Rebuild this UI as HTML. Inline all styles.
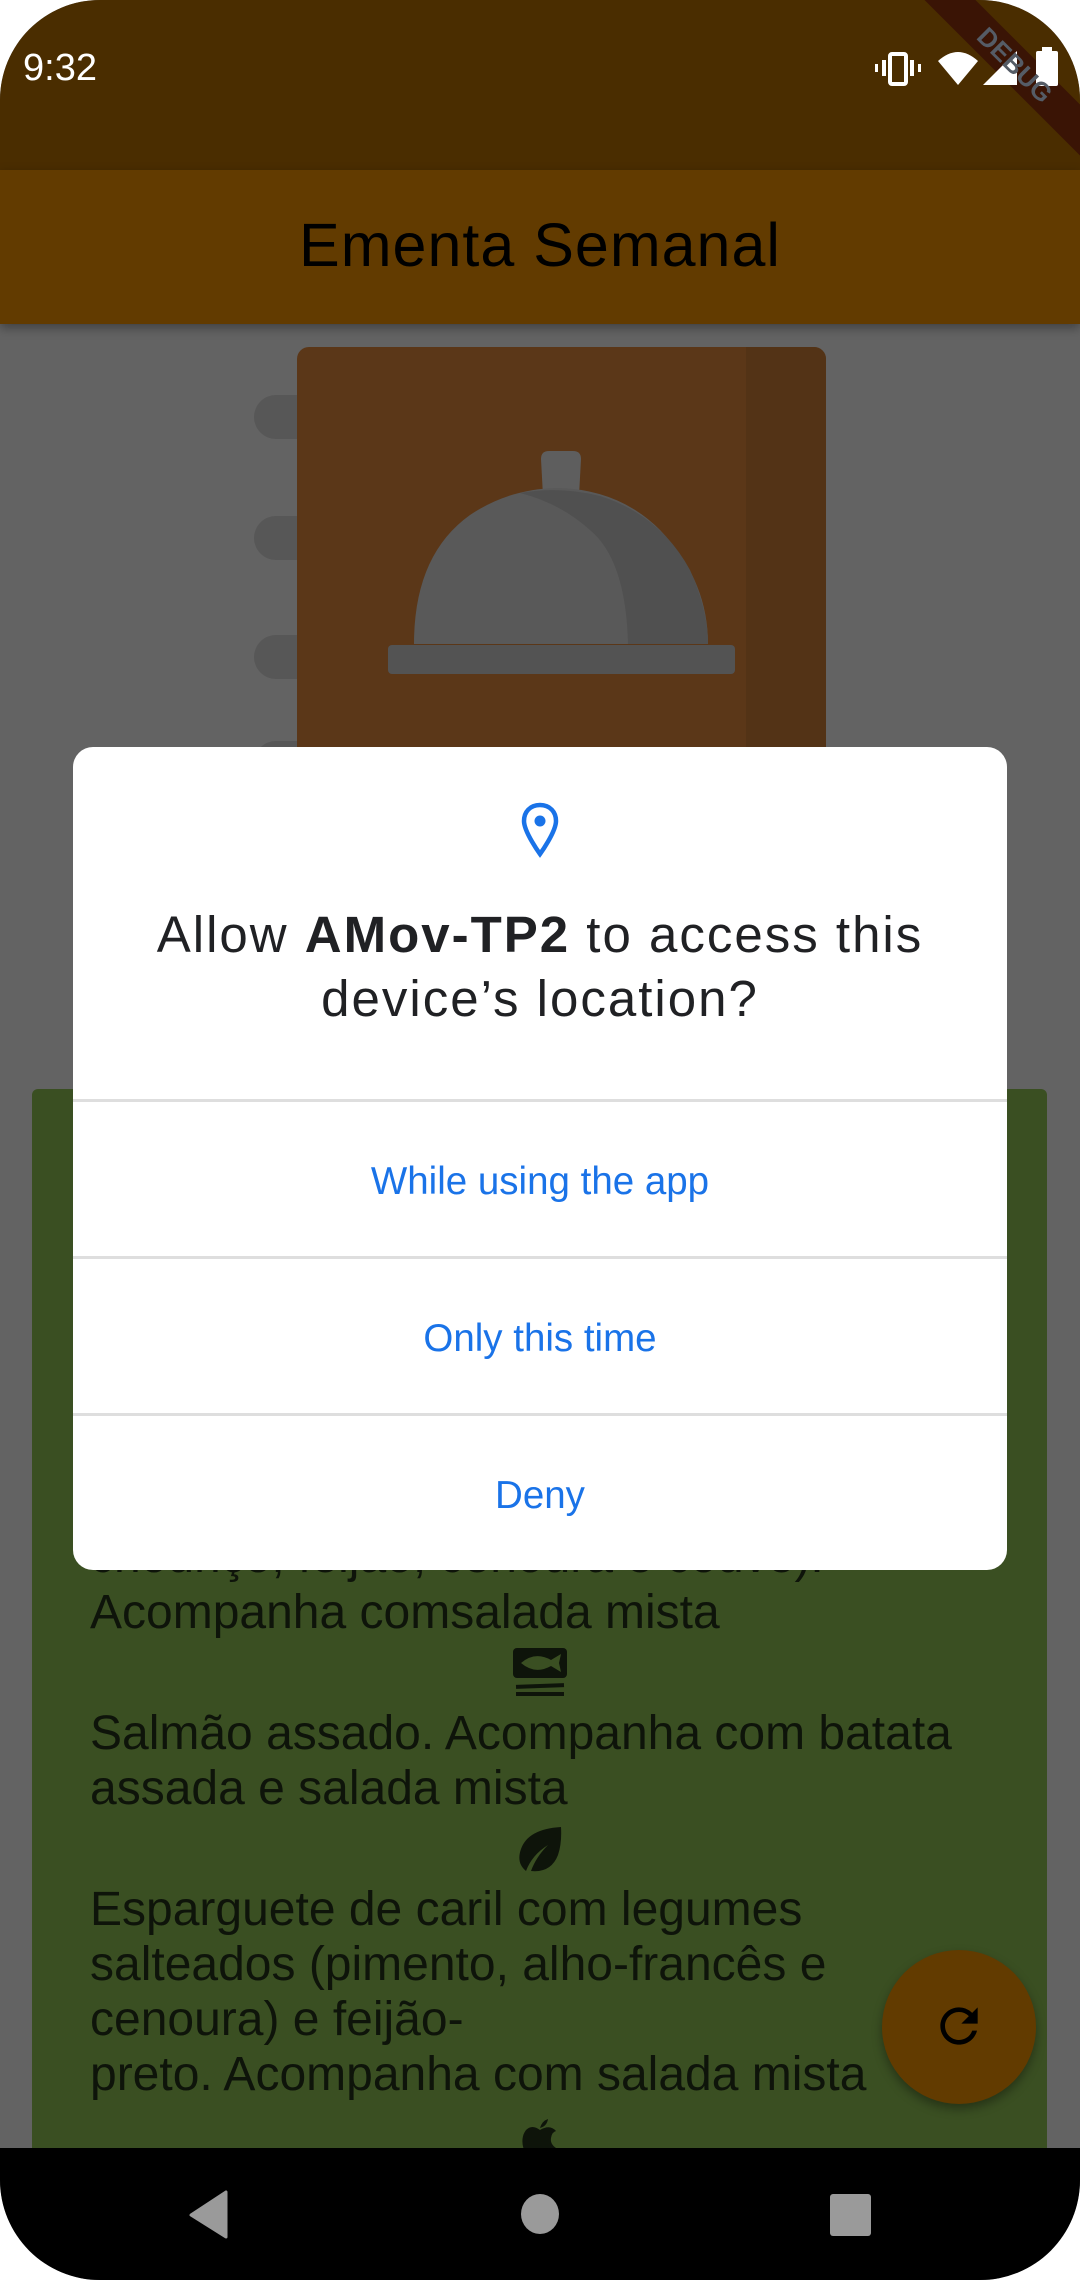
<!DOCTYPE html>
<html><head><meta charset="utf-8"><style>
*{margin:0;padding:0;box-sizing:border-box}
html,body{width:1080px;height:2280px;background:#fff;overflow:hidden;font-family:"Liberation Sans",sans-serif}
#scr{position:absolute;left:0;top:0;width:1080px;height:2280px;border-radius:100px;overflow:hidden;background:#636363}
.a{position:absolute}
.t{position:absolute;left:90px;font-size:48px;color:#0e140a;white-space:nowrap;line-height:55px}
.btn{position:absolute;left:0;width:934px;text-align:center;color:#1a73e8;font-size:38.5px}
.div{position:absolute;left:0;width:934px;height:3px;background:#dedede}
</style></head><body>
<div id="scr">
 <div class="a" style="left:0;top:0;width:1080px;height:170px;background:#4a2d00"></div>
 <div class="a" style="left:23px;top:47px;font-size:38px;color:#fff">9:32</div>
 <div class="a" style="left:865px;top:47px;width:300px;height:36px;background:#3a1405;transform:rotate(45deg);transform-origin:50% 50%;"></div>
 <svg class="a" style="left:870px;top:45px" width="210" height="45" viewBox="0 0 210 45">
  <g fill="#fff">
   <rect x="20" y="9" width="16" height="30" rx="2" fill="none" stroke="#fff" stroke-width="4"/>
   <rect x="12" y="15" width="4" height="16"/><rect x="40" y="15" width="4" height="16"/>
   <rect x="5" y="19" width="3" height="8"/><rect x="48" y="19" width="3" height="8"/>
   <path d="M68 16 Q88 -2 108 16 L88 40Z"/>
   <path d="M113 40 L147 6 V40Z"/>
   <rect x="166" y="6" width="22" height="35" rx="2"/><rect x="172" y="2" width="10" height="5"/>
  </g>
 </svg>
 <div class="a" style="left:865px;top:47px;width:300px;height:36px;line-height:36px;text-align:center;color:#555c66;font-weight:bold;font-size:26px;transform:rotate(45deg);transform-origin:50% 50%">DEBUG</div>
 <div class="a" style="left:0;top:170px;width:1080px;height:154px;background:#623b00;box-shadow:0 4px 10px rgba(0,0,0,.35)"></div>
 <div class="a" style="left:0;top:210px;width:1080px;text-align:center;font-size:61px;letter-spacing:1px;color:#000">Ementa Semanal</div>
 <!-- book -->
 <div class="a" style="left:254px;top:395px;width:70px;height:44px;border-radius:22px;background:#575757"></div>
 <div class="a" style="left:254px;top:516px;width:70px;height:44px;border-radius:22px;background:#575757"></div>
 <div class="a" style="left:254px;top:635px;width:70px;height:44px;border-radius:22px;background:#575757"></div>
 <div class="a" style="left:254px;top:741px;width:70px;height:44px;border-radius:22px;background:#575757"></div>
 <div class="a" style="left:297px;top:347px;width:529px;height:760px;border-radius:12px;background:#5b3718;overflow:hidden">
  <div class="a" style="left:449px;top:0;width:80px;height:760px;background:#533316"></div>
 </div>
 <svg class="a" style="left:380px;top:440px" width="370" height="250" viewBox="380 440 370 250">
  <path d="M541 459 Q541 451 549 451 L573 451 Q581 451 581 459 L579 496 L543 496Z" fill="#5e5e5e"/>
  <path d="M414 644 Q414 555 470 515 Q510 488 560 488 Q620 490 660 530 Q708 580 708 644Z" fill="#595959"/>
  <path d="M520 493 Q560 486 600 496 Q660 515 690 570 Q708 610 708 644 L628 644 Q626 560 590 530 Q560 503 520 493Z" fill="#505050"/>
  <rect x="388" y="645" width="347" height="29" rx="4" fill="#535353"/>
 </svg>
 <!-- green card -->
 <div class="a" style="left:32px;top:1089px;width:1015px;height:1100px;background:#3a4f22;border-radius:6px"></div>
 <div class="t" style="top:1529px">chouriço, feijão, cenoura e couve).</div>
 <div class="t" style="top:1585px">Acompanha comsalada mista</div>
 <svg class="a" style="left:513px;top:1648px" width="55" height="50" viewBox="0 0 55 50">
  <rect x="0" y="0" width="54" height="30" rx="4" fill="#0e140a"/>
  <path d="M8 15 Q22 3 38 12 L48 6 L46 15 L48 24 L38 18 Q22 27 8 15Z" fill="#3a4f22"/>
  <rect x="3" y="36" width="48" height="4" fill="#0e140a" transform="rotate(-2 27 38)"/>
  <rect x="3" y="44" width="48" height="4" fill="#0e140a"/>
 </svg>
 <div class="t" style="top:1706px">Salmão assado. Acompanha com batata<br>assada e salada mista</div>
 <svg class="a" style="left:518px;top:1827px" width="44" height="45" viewBox="0 0 44 45">
  <path d="M43 0 Q10 2 3 22 Q-2 36 8 44 Q14 28 30 18 Q18 30 13 44 Q33 46 40 28 Q44 16 43 0Z" fill="#0e140a"/>
 </svg>
 <div class="t" style="top:1882px">Esparguete de caril com legumes<br>salteados (pimento, alho-francês e<br>cenoura) e feijão-<br>preto. Acompanha com salada mista</div>
 <svg class="a" style="left:520px;top:2118px" width="40" height="40" viewBox="0 0 40 40">
  <path d="M20 12 Q12 6 6 12 Q0 20 4 32 Q8 40 14 38 Q20 36 26 38 Q32 40 36 30 Q30 26 31 20 Q32 14 36 13 Q30 6 20 12Z M20 10 Q22 3 28 1 Q27 8 20 10Z" fill="#0e140a"/>
 </svg>
 <!-- FAB -->
 <div class="a" style="left:882px;top:1950px;width:154px;height:154px;border-radius:50%;background:#623b00;box-shadow:0 5px 10px rgba(0,0,0,.35)"></div>
 <svg class="a" style="left:931px;top:1998px" width="56" height="56" viewBox="0 0 24 24">
  <path d="M17.65 6.35A7.958 7.958 0 0 0 12 4c-4.42 0-7.990 3.58-7.99 8s3.57 8 7.99 8c3.73 0 6.84-2.55 7.73-6h-2.08A5.99 5.99 0 0 1 12 18c-3.31 0-6-2.690-6-6s2.69-6 6-6c1.66 0 3.14.69 4.22 1.78L13 11h7V4l-2.35 2.35z" fill="#000"/>
 </svg>
 <!-- dialog -->
 <div class="a" style="left:73px;top:747px;width:934px;height:823px;background:#fff;border-radius:20px">
  <svg class="a" style="left:448px;top:55px" width="38" height="56" viewBox="0 0 38 56">
   <path d="M19 3 C9 3 3 10 3 19 C3 30 19 52 19 52 C19 52 35 30 35 19 C35 10 29 3 19 3Z" fill="none" stroke="#1a73e8" stroke-width="4.5"/>
   <circle cx="19" cy="19" r="5.5" fill="#1a73e8"/>
  </svg>
  <div class="a" style="left:0;top:156px;width:934px;text-align:center;font-size:51px;letter-spacing:2px;line-height:64px;color:#202124">Allow <b>AMov-TP2</b> to access this<br>device’s location?</div>
  <div class="div" style="top:352px"></div>
  <div class="btn" style="top:413px">While using the app</div>
  <div class="div" style="top:509px"></div>
  <div class="btn" style="top:570px">Only this time</div>
  <div class="div" style="top:666px"></div>
  <div class="btn" style="top:727px">Deny</div>
 </div>
 <!-- nav -->
 <div class="a" style="left:0;top:2148px;width:1080px;height:132px;background:#000"></div>
 <svg class="a" style="left:0;top:2180px" width="1080" height="80">
  <path d="M226 12 L226 57 L191 35Z" fill="#9a9a9a" stroke="#9a9a9a" stroke-width="3" stroke-linejoin="round"/>
  <ellipse cx="540" cy="34" rx="19" ry="20" fill="#9a9a9a"/>
  <rect x="830" y="14" width="41" height="42" rx="3" fill="#9a9a9a"/>
 </svg>
</div>
</body></html>
